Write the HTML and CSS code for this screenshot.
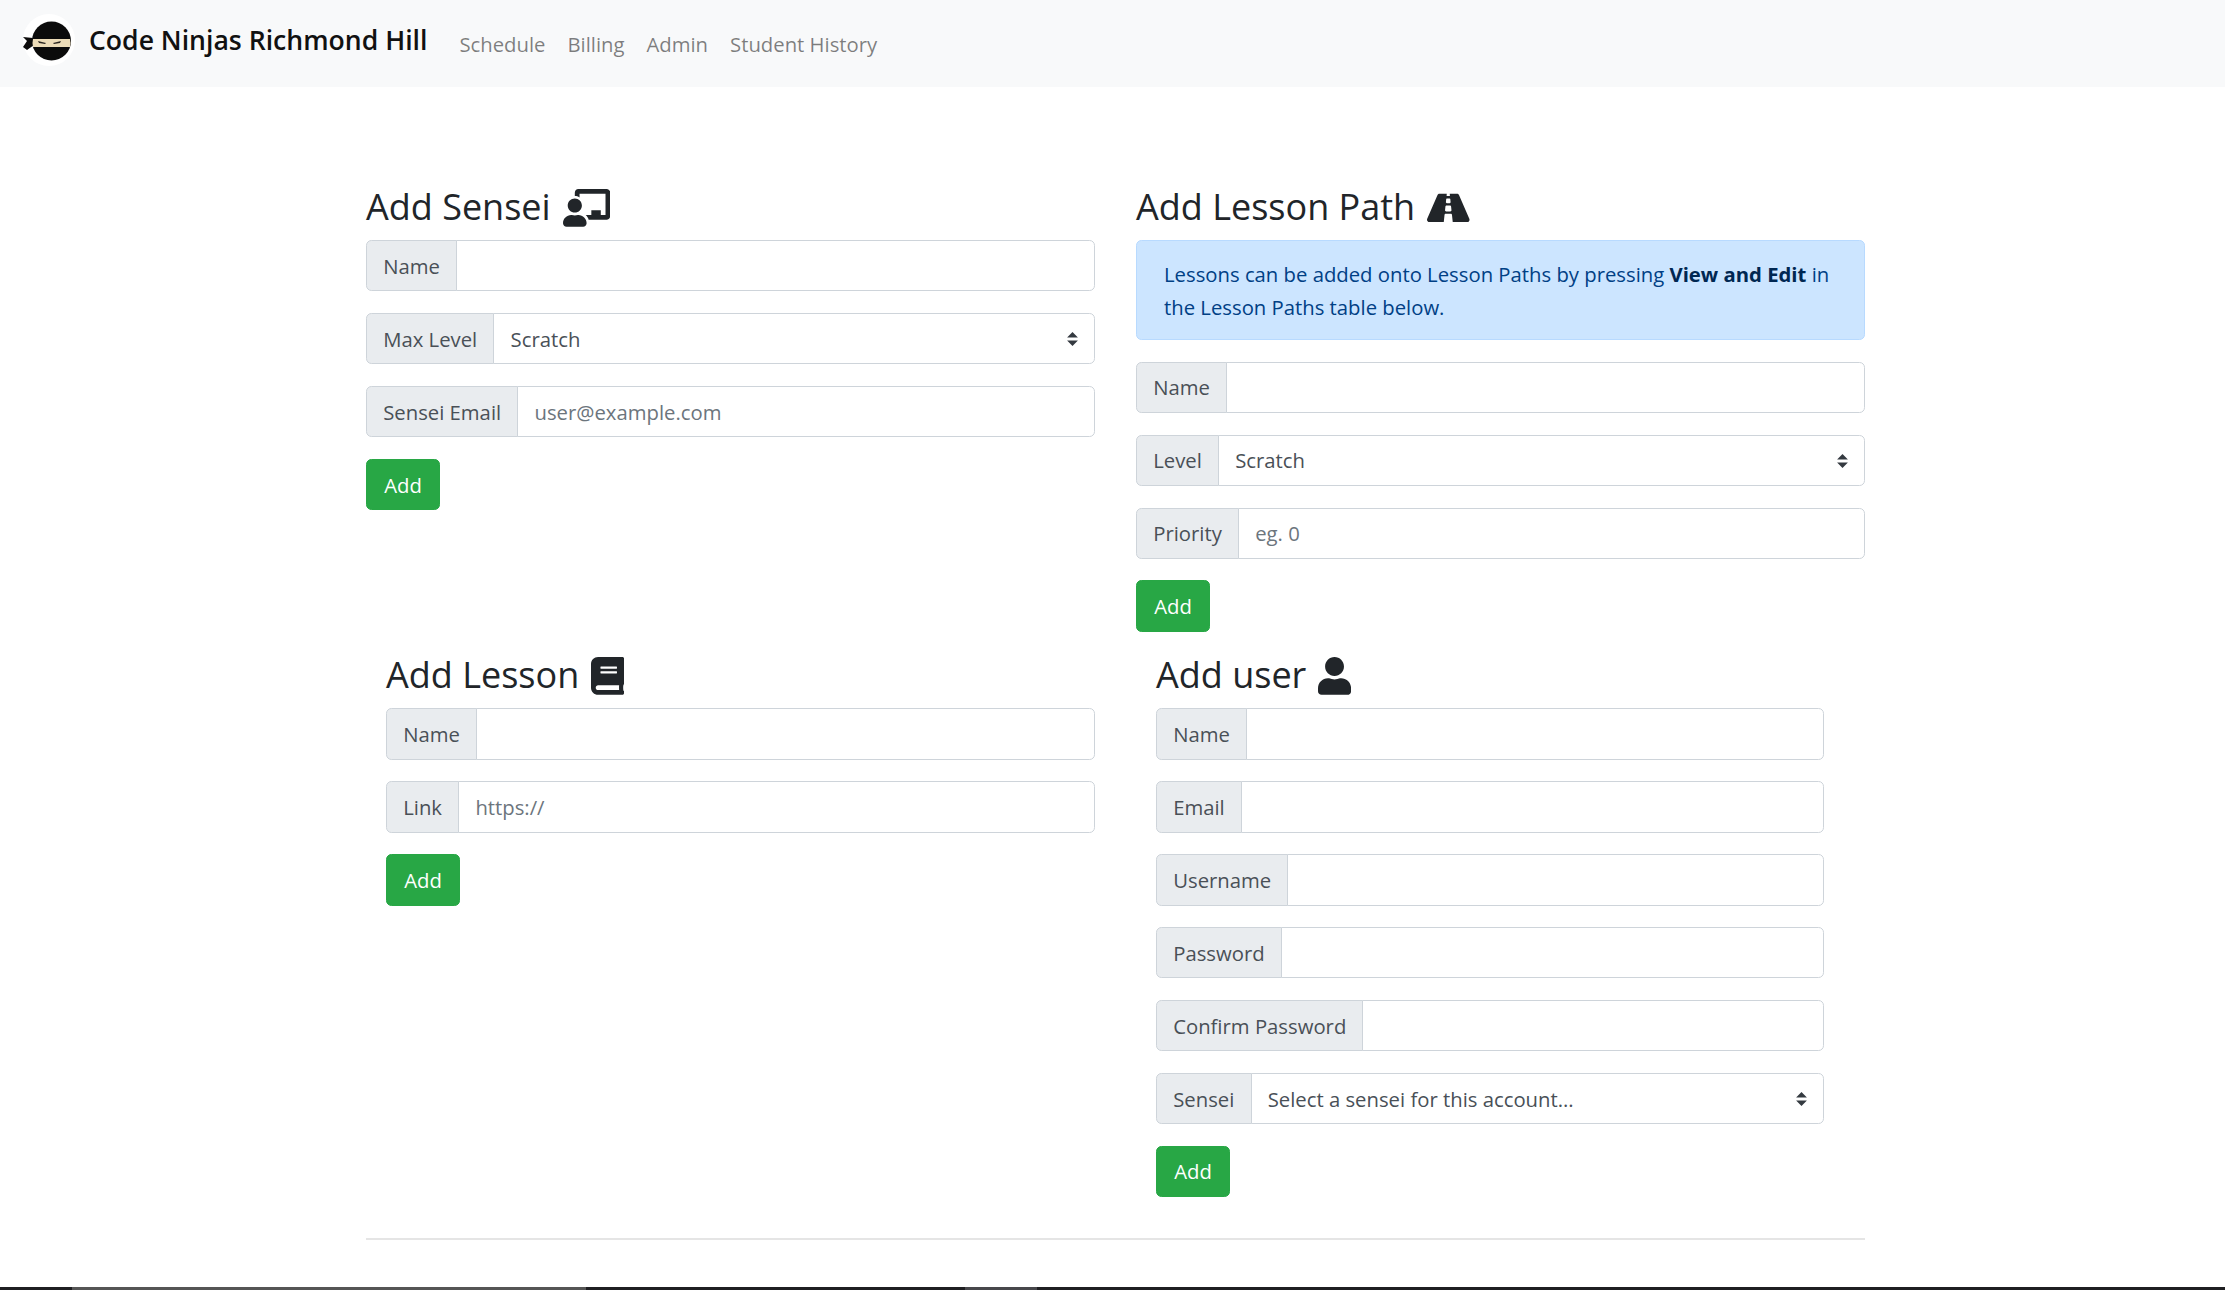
FILE: index.html
```html
<!DOCTYPE html>
<html lang="en">
<head>
    <link rel="stylesheet" href="styles.css">
    <meta charset="utf-8" />
    <title>Admin</title>
</head>
<body>

<nav class="navbar">
    <a class="brand" href="#">
        <svg class="brand-logo" viewBox="20 12 56 56">
            <circle cx="49" cy="40" r="26" fill="#fff"/>
            <path d="M33 38 L23 37 L27 41 L23 47 L27 50 L34 45 Z" fill="#0b0b0b"/>
            <ellipse cx="51.5" cy="41" rx="19.5" ry="19.5" fill="#0b0b0b"/>
            <path d="M33 39 H70 Q71 43 70 47 H33 Q32 43 33 39 Z" fill="#ecdcb8"/>
            <path d="M38 41 L46 43 L45 44 L39 43 Z M61 41 L53 43 L54 44 L60 43 Z" fill="#2a2620"/>
        </svg>
        Code Ninjas Richmond Hill
    </a>
    <a class="nav-link" href="#">Schedule</a>
    <a class="nav-link" href="#">Billing</a>
    <a class="nav-link" href="#">Admin</a>
    <a class="nav-link" href="#">Student History</a>
</nav>

<main class="content">
    <div class="row row-top">
        <section class="col">
            <h3>Add Sensei
                <svg class="icon" viewBox="0 0 640 512"><path d="M208 352c-2.39 0-4.78.35-7.06 1.09C187.98 357.3 174.35 360 160 360c-14.35 0-27.98-2.7-40.95-6.91-2.28-.74-4.66-1.09-7.05-1.09C49.94 352-.33 402.48 0 464.62.14 490.88 21.73 512 48 512h224c26.27 0 47.86-21.12 48-47.38.33-62.14-49.94-112.62-112-112.62zm-48-32c53.02 0 96-42.98 96-96s-42.98-96-96-96-96 42.98-96 96 42.98 96 96 96zM592 0H208c-26.47 0-48 22.25-48 49.59V96c23.42 0 45.1 6.78 64 17.8V64h352v288h-64v-64H384v64h-76.24c19.1 16.69 33.12 38.73 39.69 64H592c26.47 0 48-22.25 48-49.59V49.59C640 22.25 618.47 0 592 0z"/></svg>
            </h3>
            <div class="field"><span class="addon">Name</span><input class="control" type="text"></div>
            <div class="field"><span class="addon">Max Level</span><select class="control picker"><option>Scratch</option></select></div>
            <div class="field"><span class="addon">Sensei Email</span><input class="control" type="text" placeholder="user@example.com"></div>
            <button class="btn-add">Add</button>
        </section>

        <section class="col">
            <h3>Add Lesson Path
                <svg class="icon" viewBox="0 0 576 512"><path d="M573.19 402.67l-139.79-320C428.43 71.29 417.6 64 405.68 64h-97.59l2.45 23.16c.5 4.72-3.21 8.84-7.96 8.84h-29.16c-4.75 0-8.46-4.12-7.96-8.84L267.91 64h-97.59c-11.93 0-22.76 7.29-27.73 18.67L2.8 402.67C-6.45 423.86 8.31 448 30.54 448h196.84l10.31-97.68c.86-8.14 7.72-14.32 15.91-14.32h68.8c8.19 0 15.05 6.18 15.91 14.32L348.62 448h196.84c22.23 0 36.99-24.14 27.73-45.33zM260.4 135.16a8 8 0 0 1 7.96-7.16h39.29c4.09 0 7.53 3.09 7.96 7.16l4.6 43.58c.75 7.09-4.81 13.26-11.93 13.26h-40.54c-7.13 0-12.68-6.17-11.93-13.26l4.6-43.58zM315.64 304h-55.29c-9.5 0-16.91-8.23-15.91-17.68l5.07-48c.86-8.14 7.72-14.32 15.91-14.32h45.15c8.19 0 15.05 6.18 15.91 14.32l5.07 48c1 9.45-6.41 17.68-15.91 17.68z"/></svg>
            </h3>
            <div class="alert">Lessons can be added onto Lesson Paths by pressing <strong>View and Edit</strong> in the Lesson Paths table below.</div>
            <div class="field"><span class="addon">Name</span><input class="control" type="text"></div>
            <div class="field"><span class="addon">Level</span><select class="control picker"><option>Scratch</option></select></div>
            <div class="field"><span class="addon">Priority</span><input class="control" type="text" placeholder="eg. 0"></div>
            <button class="btn-add">Add</button>
        </section>
    </div>

    <div class="row">
        <section class="col col-inset">
            <h3>Add Lesson
                <svg class="icon" viewBox="0 0 448 512"><path d="M448 360V24c0-13.3-10.7-24-24-24H96C43 0 0 43 0 96v320c0 53 43 96 96 96h328c13.3 0 24-10.7 24-24v-16c0-7.5-3.5-14.3-8.9-18.7-4.2-15.4-4.2-59.3 0-74.7 5.4-4.3 8.9-11.1 8.9-18.6zM128 134c0-3.3 2.7-6 6-6h212c3.3 0 6 2.7 6 6v20c0 3.3-2.7 6-6 6H134c-3.3 0-6-2.7-6-6v-20zm0 64c0-3.3 2.7-6 6-6h212c3.3 0 6 2.7 6 6v20c0 3.3-2.7 6-6 6H134c-3.3 0-6-2.7-6-6v-20zm253.4 250H96c-17.7 0-32-14.3-32-32 0-17.6 14.4-32 32-32h285.4c-1.9 17.1-1.9 46.9 0 64z"/></svg>
            </h3>
            <div class="field"><span class="addon">Name</span><input class="control" type="text"></div>
            <div class="field"><span class="addon">Link</span><input class="control" type="text" placeholder="https://"></div>
            <button class="btn-add">Add</button>
        </section>

        <section class="col col-inset col-narrow">
            <h3>Add user
                <svg class="icon" viewBox="0 0 448 512"><path d="M224 256c70.7 0 128-57.3 128-128S294.7 0 224 0 96 57.3 96 128s57.3 128 128 128zm89.6 32h-16.7c-22.2 10.2-46.9 16-72.9 16s-50.6-5.8-72.9-16h-16.7C60.2 288 0 348.2 0 422.4V464c0 26.5 21.5 48 48 48h352c26.5 0 48-21.5 48-48v-41.6c0-74.2-60.2-134.4-134.4-134.4z"/></svg>
            </h3>
            <div class="field"><span class="addon">Name</span><input class="control" type="text"></div>
            <div class="field"><span class="addon">Email</span><input class="control" type="text"></div>
            <div class="field"><span class="addon">Username</span><input class="control" type="text"></div>
            <div class="field"><span class="addon">Password</span><input class="control" type="password"></div>
            <div class="field"><span class="addon">Confirm Password</span><input class="control" type="password"></div>
            <div class="field"><span class="addon">Sensei</span><select class="control picker"><option>Select a sensei for this account...</option></select></div>
            <button class="btn-add">Add</button>
        </section>
    </div>

    <hr class="divider">
</main>

<!-- strip of the dark window behind, cut off by the bottom edge -->
<div class="edge-strip">
    <span class="edge-tab edge-tab-wide"></span>
    <span class="edge-tab edge-tab-small"></span>
</div>

</body>
</html>
```

FILE: styles.css
```css
html, body {
    margin: 0;
    height: 100%;
}

body {
    display: flex;
    flex-direction: column;
    overflow: hidden;
    background: #fff;
    color: #212529;
    font-family: "Open Sans", "Noto Sans", sans-serif;
    font-size: 20.3px;
}

/* Navbar */
.navbar {
    display: flex;
    align-items: center;
    height: 87px;
    flex-shrink: 0;
    padding: 0 20px;
    background: #f8f9fa;
}

.brand {
    display: flex;
    align-items: center;
    margin-right: 21px;
    margin-bottom: 7px;
    color: #111;
    font-size: 26.6px;
    font-weight: 600;
    text-decoration: none;
}

.brand-logo {
    width: 56px;
    height: 56px;
    margin-right: 13px;
}

.nav-link {
    padding: 0 11px;
    color: rgba(0, 0, 0, 0.5);
    text-decoration: none;
}

/* Page content */
.content {
    width: 1499px;
    margin-left: 366px;
    padding-top: 97px;
}

.row {
    display: grid;
    grid-template-columns: 729px 729px;
    column-gap: 41px;
}

.row-top {
    margin-bottom: 20.5px;
}

.col-inset {
    padding-left: 20px;
}

.col-narrow {
    padding-right: 41px;
}

h3 {
    display: flex;
    align-items: center;
    gap: 12px;
    height: 45.4px;
    margin: 0 0 10.8px;
    font-size: 36px;
    font-weight: 500;
}

.icon {
    height: 37.8px;
    margin-top: 2px;
    fill: #212529;
    flex-shrink: 0;
}

.alert {
    height: 100px;
    box-sizing: border-box;
    margin-bottom: 21.6px;
    padding: 17px 27px 0;
    border: 1px solid #b8daff;
    border-radius: 5.4px;
    background: #cce5ff;
    color: #004085;
    line-height: 32.4px;
}

.alert strong {
    color: #002752;
}

/* Input groups */
.field {
    display: flex;
    height: 51.3px;
    margin-bottom: 21.6px;
}

.addon {
    display: flex;
    align-items: center;
    padding: 0 16.2px;
    border: 1px solid #ced4da;
    border-radius: 5.4px 0 0 5.4px;
    background: #e9ecef;
    color: #495057;
    white-space: nowrap;
}

.control {
    flex: 1;
    min-width: 0;
    box-sizing: border-box;
    margin: 0 0 0 -1px;
    padding: 0 16.2px;
    border: 1px solid #ced4da;
    border-radius: 0 5.4px 5.4px 0;
    background-color: #fff;
    color: #495057;
    font-family: inherit;
    font-size: inherit;
}

.control::placeholder {
    color: #6c757d;
    opacity: 1;
}

.picker {
    appearance: none;
    background-image: url("data:image/svg+xml,%3csvg xmlns='http://www.w3.org/2000/svg' viewBox='0 0 4 5'%3e%3cpath fill='%23343a40' d='M2 0L0 2h4zm0 5L0 3h4z'/%3e%3c/svg%3e");
    background-repeat: no-repeat;
    background-position: right 16px center;
    background-size: 11px 13.5px;
}

.btn-add {
    display: block;
    width: 74px;
    height: 51.3px;
    padding: 0;
    border: 1px solid #28a745;
    border-radius: 5.4px;
    background: #28a745;
    color: #fff;
    font-family: inherit;
    font-size: inherit;
}

.divider {
    height: 2px;
    margin: 41px 0 0;
    border: 0;
    background: #e5e5e5;
}

/* Bottom edge */
.edge-strip {
    display: flex;
    height: 3px;
    margin-top: auto;
    flex-shrink: 0;
    padding-left: 72px;
    background: #1f1f22;
}

.edge-tab-wide {
    width: 514px;
    background: #555;
}

.edge-tab-small {
    width: 72px;
    margin-left: 379px;
    background: #47474b;
}
```
